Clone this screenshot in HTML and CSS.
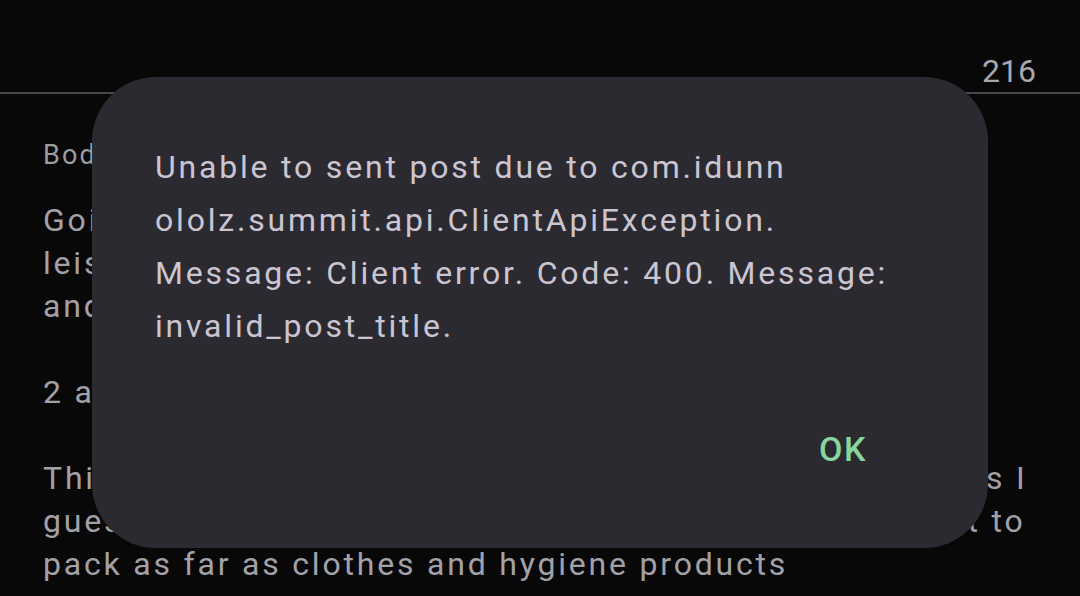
FILE: index.html
```html
<!DOCTYPE html>
<html lang="en">
<head>
<meta charset="utf-8">
<title>Post error</title>
<link rel="stylesheet" href="styles.css">
</head>
<body>
<div class="screen">
  <header class="topbar">
    <span class="counter">216</span>
  </header>
  <main class="content">
    <div class="field-label">Body</div>
    <p class="body-text">Going on a trip with my partner for two weeks,<br>leisure, a bit of sightseeing in the old town<br>and some time at the beach.<br><br>2 adults, no kids, flying carry-on only.<br><br>This is our first trip in 5 years so we had a few questions I<br>guess mostly about what we must bring along and what to<br>pack as far as clothes and hygiene products</p>
  </main>
  <div class="dialog" role="alertdialog">
    <p class="dialog-message">Unable to sent post due to com.idunn<br>ololz.summit.api.ClientApiException.<br>Message: Client error. Code: 400. Message:<br>invalid_post_title.</p>
    <div class="dialog-actions">
      <button class="text-button">OK</button>
    </div>
  </div>
</div>
</body>
</html>
```

FILE: styles.css
```css
html, body {
  margin: 0;
  padding: 0;
  background: #080808;
}

.screen {
  position: relative;
  width: 1080px;
  height: 596px;
  overflow: hidden;
  font-family: Roboto, "Noto Sans", sans-serif;
  background: #080808;
}

.topbar {
  display: flex;
  justify-content: flex-end;
  padding: 50px 44px 0 43px;
  height: 42px;
  border-bottom: 2px solid #48474d;
}

.counter {
  font-size: 32px;
  line-height: 42px;
  color: #a9a7ae;
}

.content {
  padding: 43px 43px 0 43px;
}

.field-label {
  font-size: 27px;
  line-height: 36px;
  letter-spacing: 2.2px;
  color: #9e9ca3;
  margin-bottom: 26px;
}

.body-text {
  margin: 0;
  font-size: 32px;
  line-height: 43px;
  letter-spacing: 2.8px;
  white-space: nowrap;
  color: #a3a1a8;
}

.dialog {
  position: absolute;
  left: 92px;
  top: 77px;
  width: 896px;
  box-sizing: border-box;
  padding: 64px 40px 67px 63px;
  background: #2b2a31;
  border-radius: 64px;
}

.dialog-message {
  margin: 0;
  font-size: 32px;
  line-height: 53px;
  letter-spacing: 2.8px;
  color: #cbc5d2;
}

.dialog-actions {
  display: flex;
  justify-content: flex-end;
  margin-top: 64px;
  padding-right: 53px;
}

.text-button {
  font-family: Roboto, "Noto Sans", sans-serif;
  font-size: 34px;
  font-weight: 500;
  line-height: 40px;
  letter-spacing: 1.5px;
  padding: 12px 28px;
  border: none;
  background: transparent;
  color: #88d69c;
}
```
